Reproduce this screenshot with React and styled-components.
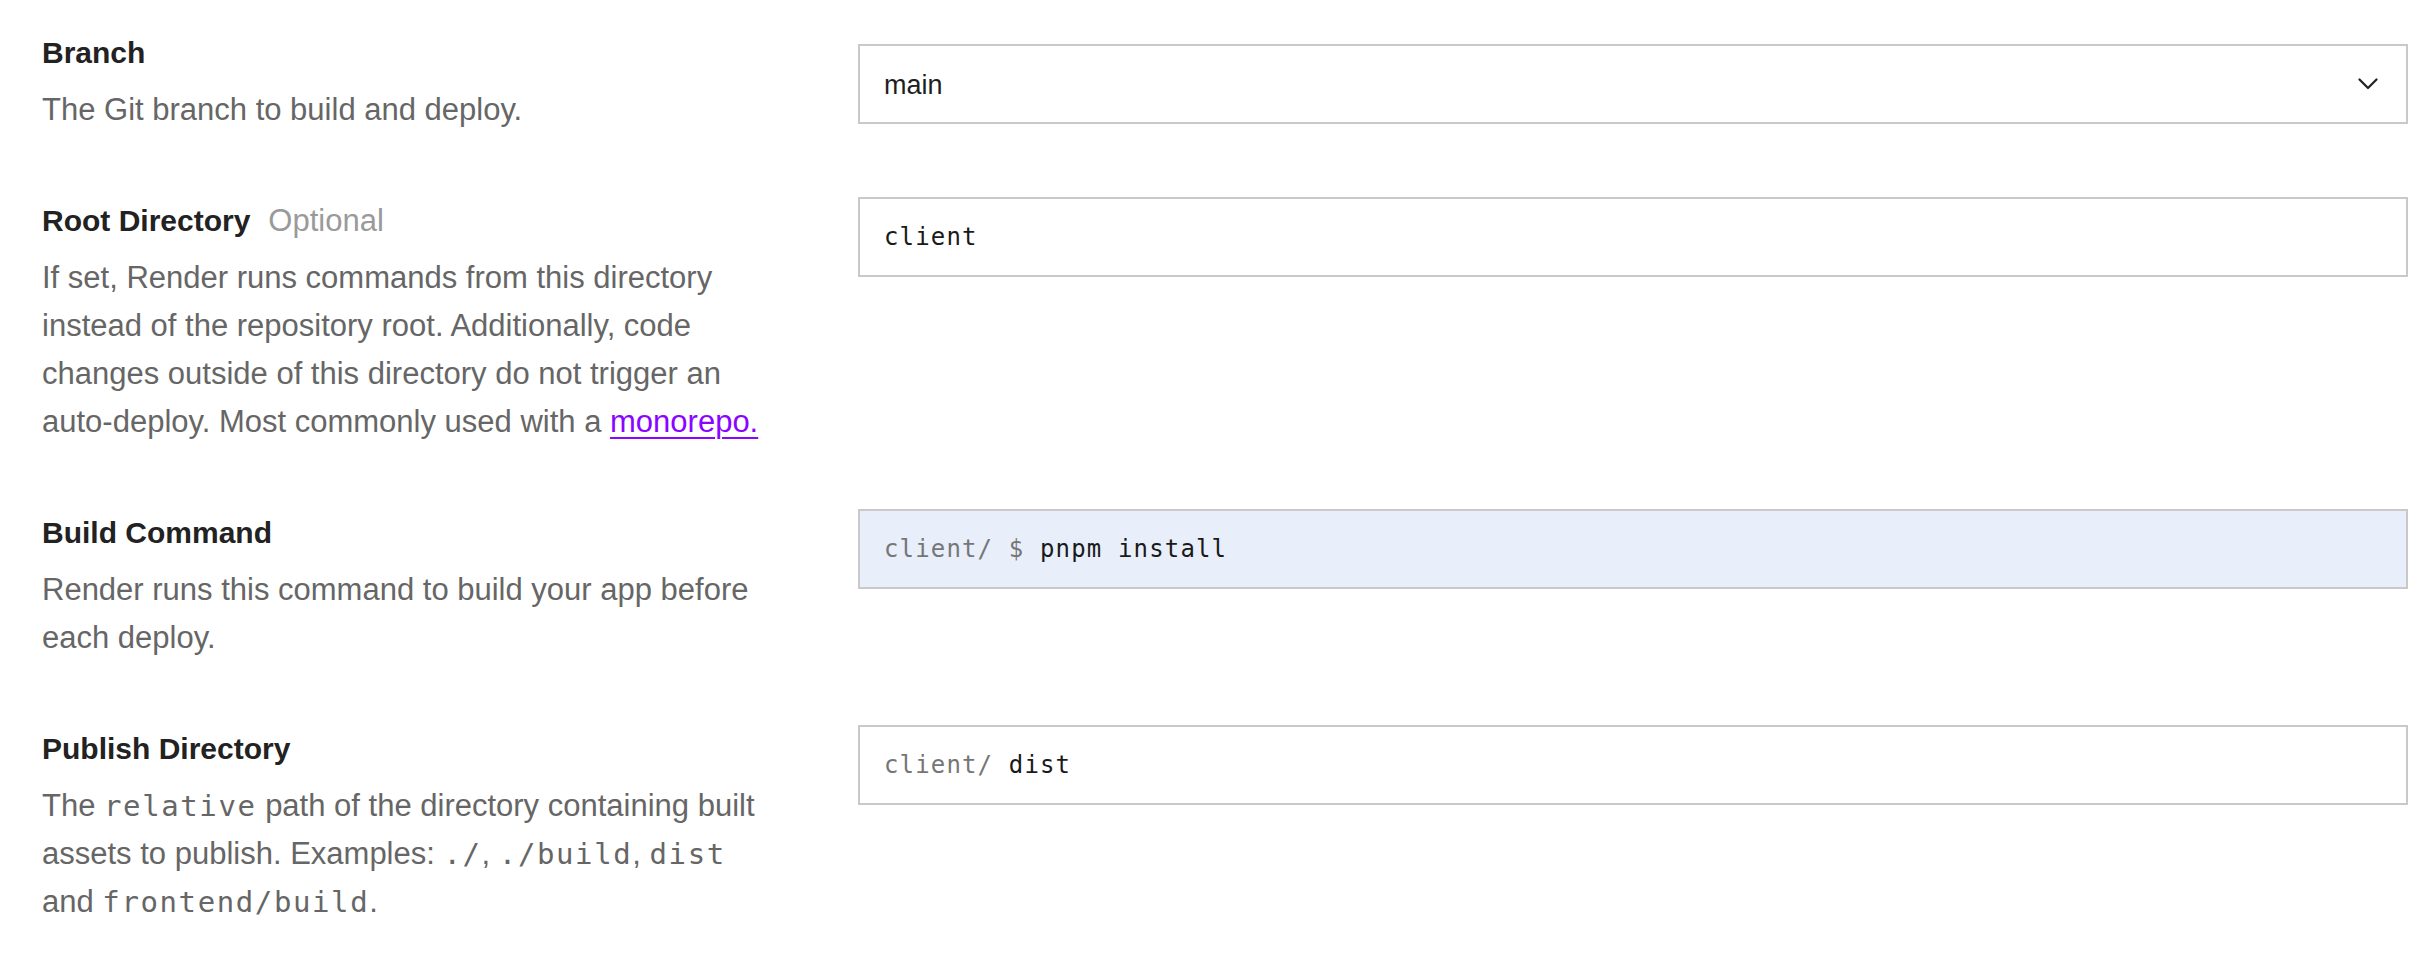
import React from "react";
import styled, { createGlobalStyle } from "styled-components";

const GlobalStyle = createGlobalStyle`
  html, body {
    margin: 0;
    padding: 0;
    background: #ffffff;
  }
  body {
    font-family: "Liberation Sans", Arial, sans-serif;
    -webkit-font-smoothing: antialiased;
  }
`;

const Page = styled.main`
  display: flex;
  flex-direction: column;
  gap: 63px;
  padding: 29px 18px 0 42px;
`;

const Row = styled.section`
  display: grid;
  grid-template-columns: 728px 1fr;
  column-gap: 88px;
  align-items: start;
`;

const Info = styled.div`
  padding-top: 4px;
`;

const TitleLine = styled.div`
  display: flex;
  align-items: baseline;
  gap: 18px;
  height: 40px;
  line-height: 40px;
  margin-bottom: 13px;
`;

const Title = styled.h3`
  margin: 0;
  font-size: 30px;
  font-weight: 700;
  color: #222222;
`;

const Optional = styled.span`
  font-size: 31px;
  color: #9a9a9a;
`;

const Description = styled.p`
  margin: 0;
  font-size: 31px;
  line-height: 48px;
  color: #666666;
`;

const Code = styled.code`
  font-family: "DejaVu Sans Mono", "Liberation Mono", monospace;
  font-size: 29px;
  line-height: 1;
  letter-spacing: 1.6px;
  color: #666666;
`;

const Link = styled.a`
  color: #8a05ff;
  text-decoration: underline;
  text-decoration-thickness: 2px;
  text-underline-offset: 5px;
`;

const Field = styled.div`
  box-sizing: border-box;
  height: 80px;
  display: flex;
  align-items: center;
  padding: 0 28px 0 24px;
  border: 2px solid #c9c9c9;
  background: ${(p) => (p.$highlight ? "#e8effb" : "#ffffff")};
  margin-top: ${(p) => p.$offset || 0}px;
`;

const SelectValue = styled.span`
  flex: 1;
  padding-top: 3px;
  font-size: 27px;
  color: #1e1e1e;
`;

const MonoValue = styled.span`
  font-family: "DejaVu Sans Mono", "Liberation Mono", monospace;
  font-size: 24px;
  letter-spacing: 1.15px;
  color: #1a1a1a;
  white-space: pre;
`;

const Prefix = styled.span`
  color: #767676;
`;

const Chevron = () => (
  <svg width="20" height="12" viewBox="0 0 20 12" fill="none">
    <polyline
      points="1.5,1.5 10,10 18.5,1.5"
      stroke="#222"
      strokeWidth="2.2"
      strokeLinecap="round"
      strokeLinejoin="round"
    />
  </svg>
);

export default function App() {
  return (
    <>
      <GlobalStyle />
      <Page>
        <Row>
          <Info>
            <TitleLine>
              <Title>Branch</Title>
            </TitleLine>
            <Description>The Git branch to build and deploy.</Description>
          </Info>
          <Field $offset={15}>
            <SelectValue>main</SelectValue>
            <Chevron />
          </Field>
        </Row>

        <Row>
          <Info>
            <TitleLine>
              <Title>Root Directory</Title>
              <Optional>Optional</Optional>
            </TitleLine>
            <Description>
              If set, Render runs commands from this directory instead of the
              repository root. Additionally, code changes outside of this
              directory do not trigger an auto-deploy. Most commonly used with
              a <Link href="#">monorepo.</Link>
            </Description>
          </Info>
          <Field>
            <MonoValue>client</MonoValue>
          </Field>
        </Row>

        <Row>
          <Info>
            <TitleLine>
              <Title>Build Command</Title>
            </TitleLine>
            <Description>
              Render runs this command to build your app before each deploy.
            </Description>
          </Info>
          <Field $highlight>
            <MonoValue>
              <Prefix>client/ $ </Prefix>pnpm install
            </MonoValue>
          </Field>
        </Row>

        <Row>
          <Info>
            <TitleLine>
              <Title>Publish Directory</Title>
            </TitleLine>
            <Description>
              The <Code>relative</Code> path of the directory containing built
              assets to publish. Examples: <Code>./</Code>,{" "}
              <Code>./build</Code>, <Code>dist</Code> and{" "}
              <Code>frontend/build</Code>.
            </Description>
          </Info>
          <Field>
            <MonoValue>
              <Prefix>client/ </Prefix>dist
            </MonoValue>
          </Field>
        </Row>
      </Page>
    </>
  );
}
